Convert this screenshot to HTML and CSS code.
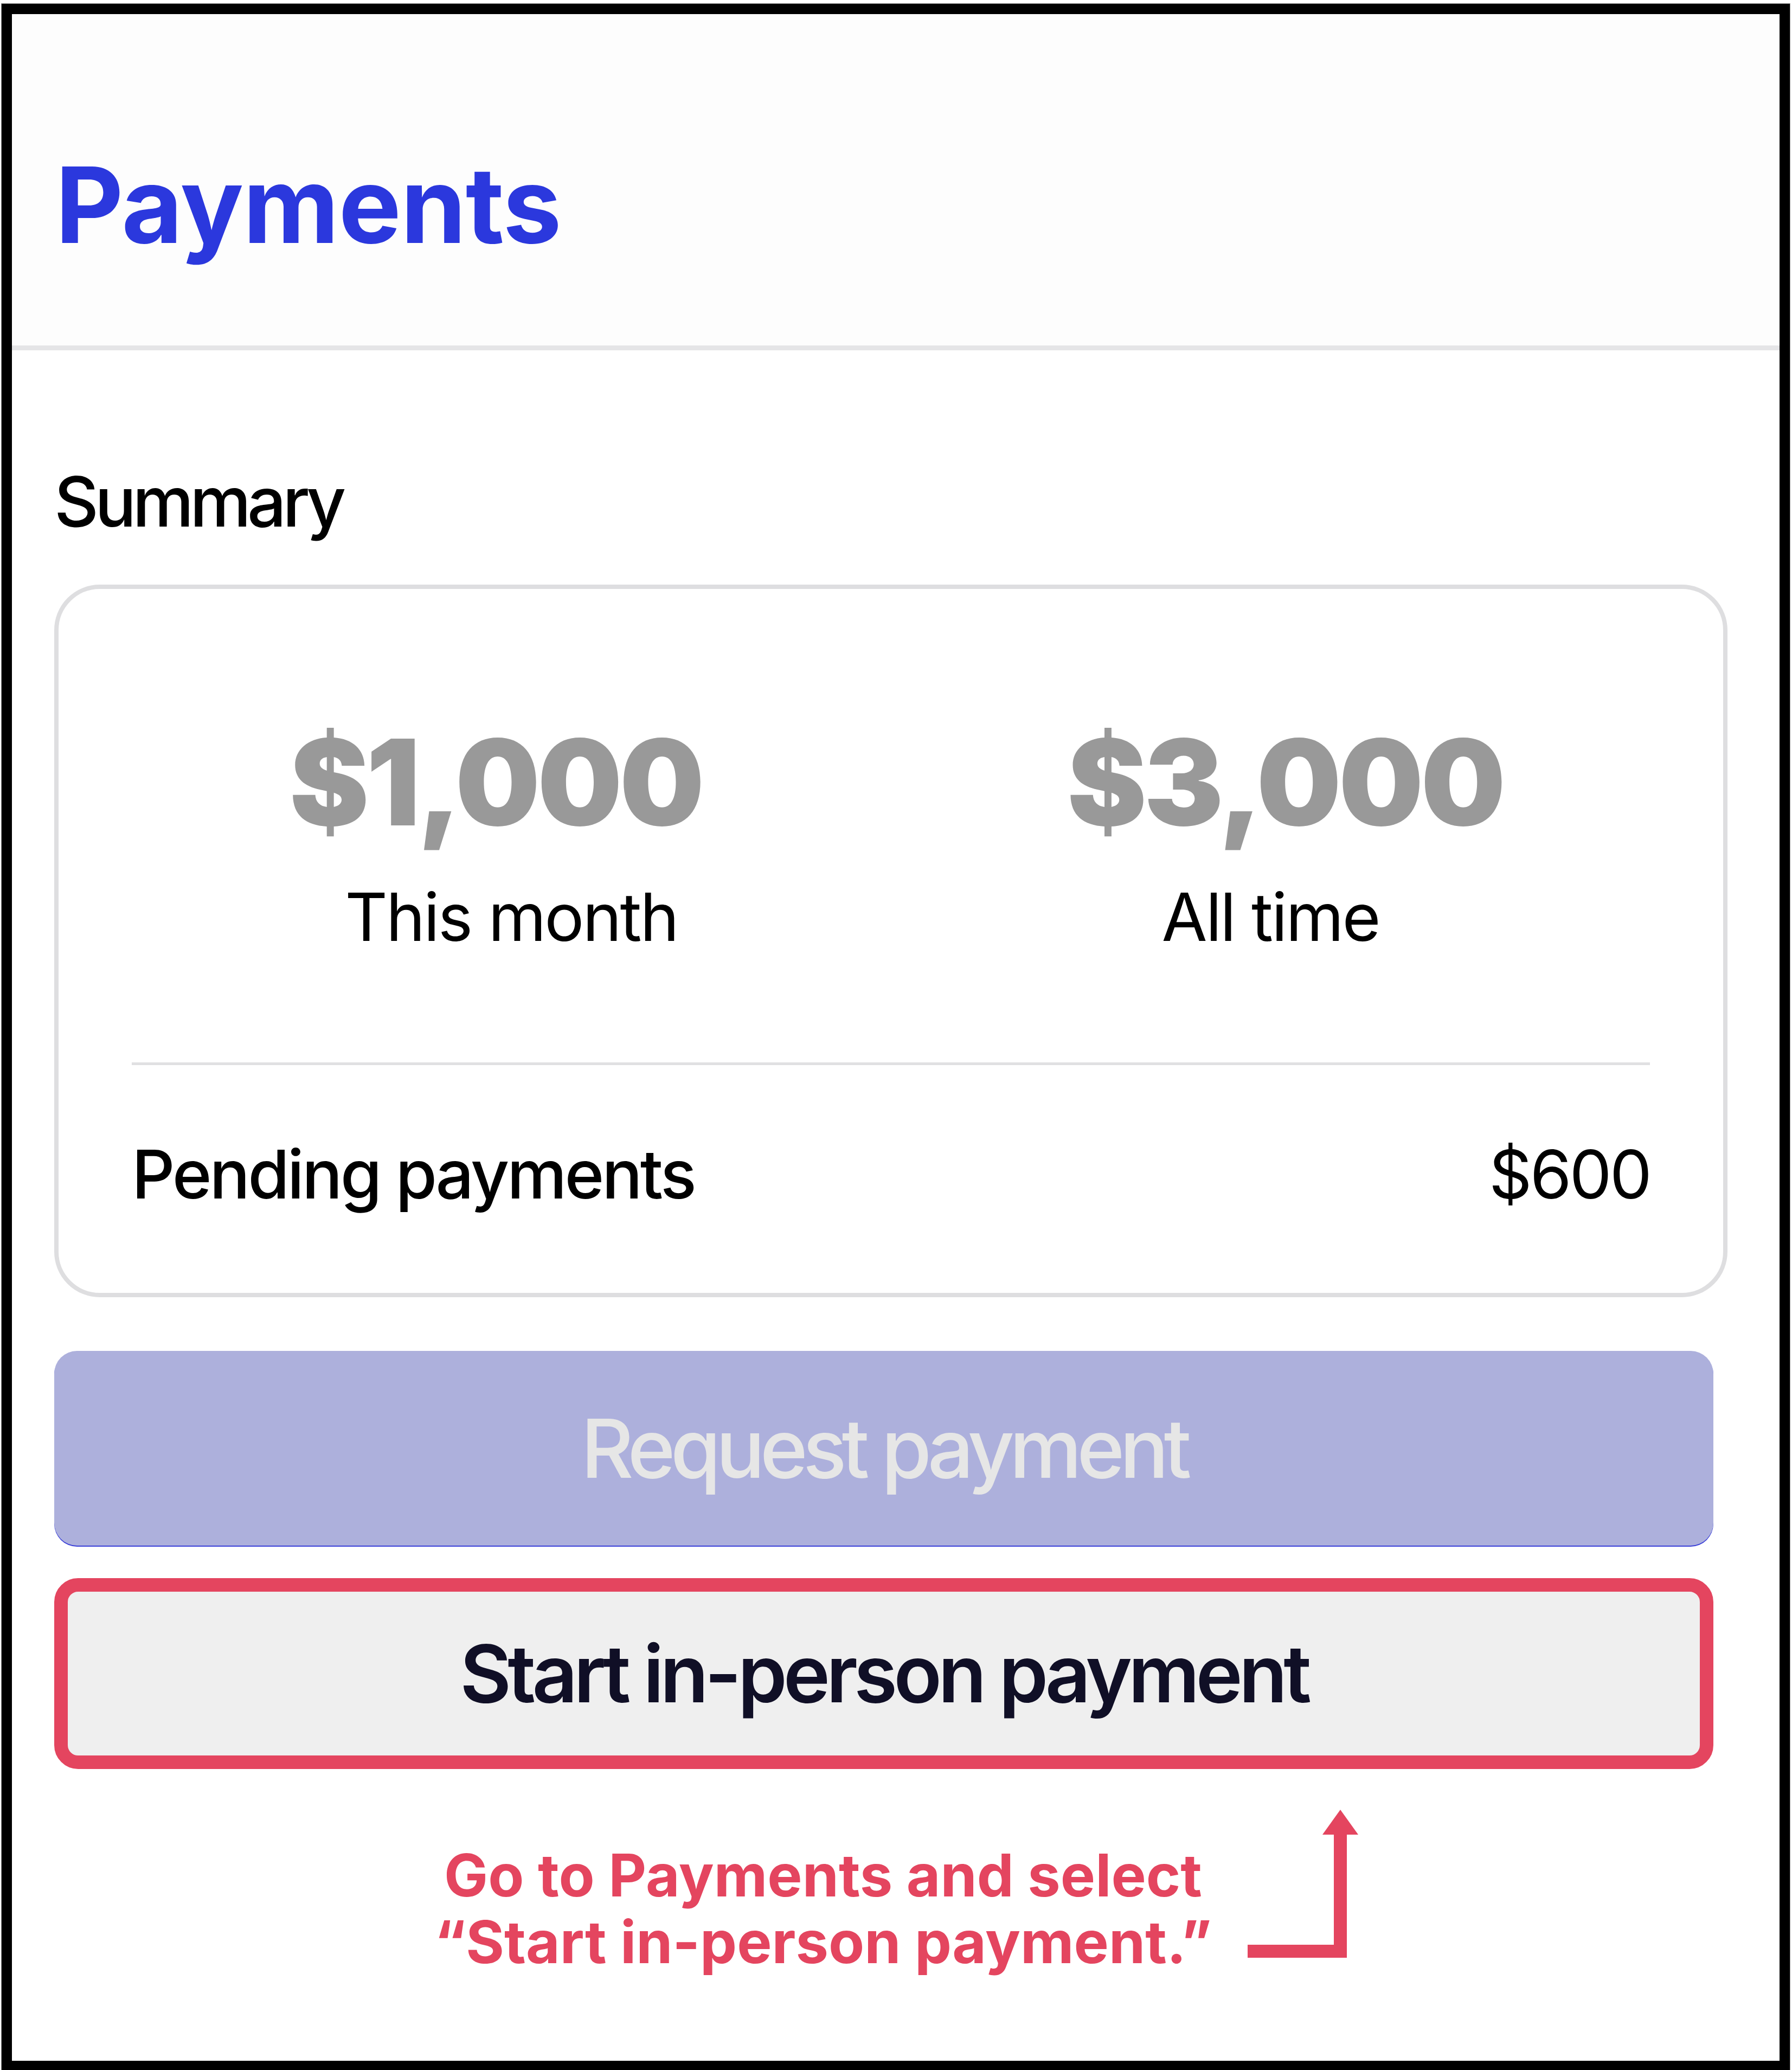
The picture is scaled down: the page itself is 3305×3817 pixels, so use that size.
FILE: index.html
```html
<!DOCTYPE html>
<html lang="en">
<head>
<meta charset="utf-8">
<title>Payments</title>
<link rel="stylesheet" href="styles.css">
</head>
<body>
<div class="frame">
  <header class="top">
    <h1 class="title">Payments</h1>
  </header>
  <main class="content">
    <h2 class="section-title">Summary</h2>
    <section class="card">
      <div class="stats">
        <div class="stat stat-month">
          <div class="amount">$1,000</div>
          <div class="label">This month</div>
        </div>
        <div class="stat stat-all">
          <div class="amount">$3,000</div>
          <div class="label">All time</div>
        </div>
      </div>
      <div class="divider"></div>
      <div class="row">
        <span class="row-label">Pending payments</span>
        <span class="row-value">$600</span>
      </div>
    </section>
    <button class="btn btn-primary" type="button" disabled>Request payment</button>
    <button class="btn btn-secondary" type="button">Start in-person payment</button>
    <div class="annotation">
      <p class="note">Go to Payments and select<br>“Start in-person payment.”</p>
      <svg class="arrow" width="204" height="273" viewBox="0 0 204 273" aria-hidden="true">
        <rect x="0" y="249" width="183" height="24" fill="#e4455f"/>
        <rect x="159" y="44" width="24" height="229" fill="#e4455f"/>
        <polygon points="138,46 204,46 171,0" fill="#e4455f"/>
      </svg>
    </div>
  </main>
</div>
</body>
</html>
```

FILE: styles.css
```css
html, body {
  margin: 0;
  padding: 0;
  background: #ffffff;
}

body {
  padding: 7px 0 0 3px;
  font-family: Inter, "Noto Sans", "Liberation Sans", sans-serif;
}

.frame {
  width: 3260px;
  height: 3774px;
  border: 19px solid #000000;
  box-shadow: 0 0 0 1px #9a9a9a;
  background: #ffffff;
  display: flex;
  flex-direction: column;
}

.top {
  box-sizing: border-box;
  height: 620px;
  padding: 255px 0 0 80px;
  background: #fdfdfd;
  border-bottom: 9px solid #e5e5e7;
}

.title {
  margin: 0;
  font-size: 194px;
  line-height: 194px;
  font-weight: 700;
  color: #2b38dd;
  letter-spacing: -1px;
}

.content {
  padding: 0 96px 0 78px;
}

.section-title {
  margin: 216px 0 0;
  font-size: 127px;
  line-height: 127px;
  font-weight: 500;
  color: #000000;
  letter-spacing: -7px;
}

.card {
  margin-top: 89px;
  border: 8px solid #dedee0;
  border-radius: 84px;
  padding: 246px 135px 157px;
  background: #ffffff;
}

.stats {
  display: grid;
  grid-template-columns: 1fr 1fr;
  text-align: center;
}

.amount {
  font-size: 220px;
  line-height: 220px;
  font-weight: 900;
  color: #999999;
  letter-spacing: -5px;
}

.stat-month .amount {
  margin-right: 58px;
}

.stat-all .amount {
  margin-left: 54px;
}

.label {
  margin-top: 78px;
  font-size: 122px;
  line-height: 122px;
  font-weight: 400;
  color: #000000;
  letter-spacing: -3px;
}

.divider {
  margin-top: 207px;
  height: 5px;
  background: #e0e0e2;
}

.row {
  margin-top: 139px;
  display: flex;
  justify-content: space-between;
  align-items: baseline;
  font-size: 124px;
  line-height: 124px;
  color: #000000;
}

.row-label {
  font-weight: 500;
  letter-spacing: -4px;
}

.row-value {
  font-weight: 400;
  letter-spacing: -4px;
}

.btn {
  display: flex;
  align-items: center;
  justify-content: center;
  box-sizing: border-box;
  width: calc(100% - 26px);
  padding: 0;
  font-family: inherit;
  cursor: pointer;
}

.btn-primary {
  margin-top: 99px;
  height: 359px;
  border: none;
  border-radius: 42px;
  background: #adb0dc;
  box-shadow: 0 2px 0 #3b40d8;
  color: #e6e6e6;
  font-size: 150px;
  font-weight: 500;
  letter-spacing: -9px;
}

.btn-secondary {
  margin-top: 60px;
  height: 352px;
  border: 25px solid #e4455f;
  border-radius: 44px;
  background: #efefef;
  color: #100f26;
  font-size: 146px;
  font-weight: 600;
  letter-spacing: -7px;
}

.annotation {
  display: flex;
  align-items: flex-start;
  margin-top: 75px;
  padding-left: 701px;
}

.note {
  margin: 59px 0 0;
  font-size: 108px;
  line-height: 123px;
  font-weight: 700;
  color: #e4455f;
  text-align: center;
  letter-spacing: 0;
}

.arrow {
  display: block;
  margin-left: 66px;
  flex: none;
}
```
